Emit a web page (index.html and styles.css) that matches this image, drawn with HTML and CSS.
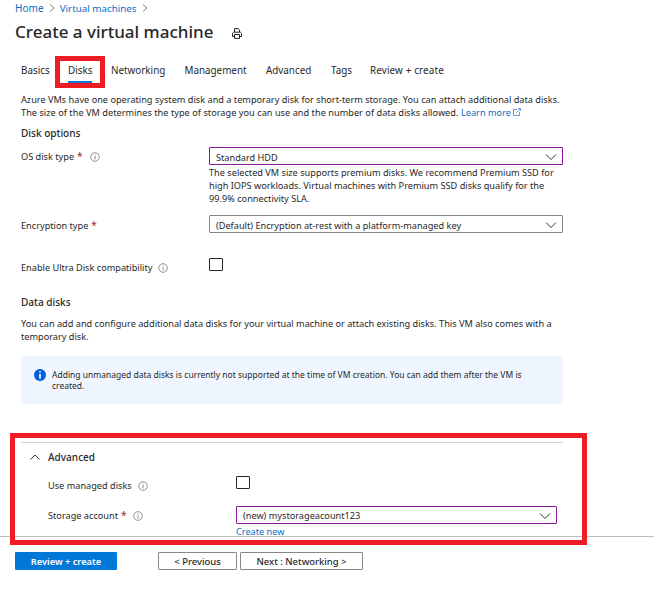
FILE: index.html
```html
<!DOCTYPE html>
<html lang="en">
<head>
<meta charset="utf-8">
<title>Create a virtual machine</title>
<link rel="stylesheet" href="styles.css">
</head>
<body>
<svg class="defs" width="0" height="0" aria-hidden="true">
  <symbol id="info" viewBox="0 0 10 10"><circle cx="5" cy="5" r="4.3" fill="none" stroke="#777" stroke-width=".8"/><path d="M5 4.2V7.4M5 2.5V3.3" stroke="#777" stroke-width=".9"/></symbol>
  <symbol id="down" viewBox="0 0 12 8"><path d="M1 1.5L6 6.5L11 1.5" fill="none" stroke="#333" stroke-width="1"/></symbol>
  <symbol id="sep" viewBox="0 0 6 8"><path d="M1 .5L5 4L1 7.5" fill="none" stroke="#777" stroke-width=".9"/></symbol>
</svg>
<nav class="crumbs">
  <a>Home</a><svg class="sep"><use href="#sep"/></svg><a>Virtual machines</a><svg class="sep"><use href="#sep"/></svg>
</nav>
<header class="title">
  <h1>Create a virtual machine</h1>
  <svg class="print" viewBox="0 0 10 11" fill="none" stroke="#222"><path d="M2.5 4V.6H6.2L7.5 1.9V4M2.5 8.5H.5V5.2L1.6 4.2H8.4L9.5 5.2V8.5H7.5M2.5 6.5H7.5V10.4H2.5Z"/></svg>
</header>
<nav class="tabs">
  <span>Basics</span><span class="active"><b>Disks</b></span><span>Networking</span><span>Management</span><span>Advanced</span><span>Tags</span><span class="review">Review + create</span>
</nav>
<main>
  <p class="text">Azure VMs have one operating system disk and a temporary disk for short-term storage. You can attach additional data disks.<br><span class="lead">The size of the VM determines the type of storage you can use and the number of data disks allowed. <a>Learn more</a></span> <svg class="ext" viewBox="0 0 8 8" fill="none" stroke="#3b82d0" stroke-width=".8"><path d="M4 1.5H.5V7.5H6.5V4M3.3 4.7L7.4 .6M5.2 .5H7.5V2.8"/></svg></p>
  <h2 class="opts">Disk options</h2>
  <div class="row os">
    <label>OS disk type <i>*</i><svg class="info"><use href="#info"/></svg></label>
    <div>
      <div class="select hot"><span>Standard HDD</span><svg class="down"><use href="#down"/></svg></div>
      <p class="text hint">The selected VM size supports premium disks. We recommend Premium SSD for<br>high IOPS workloads. Virtual machines with Premium SSD disks qualify for the<br>99.9% connectivity SLA.</p>
    </div>
  </div>
  <div class="row enc">
    <label>Encryption type <i>*</i></label>
    <div class="select"><span>(Default) Encryption at-rest with a platform-managed key</span><svg class="down"><use href="#down"/></svg></div>
  </div>
  <div class="row ultra">
    <label>Enable Ultra Disk compatibility<svg class="info"><use href="#info"/></svg></label>
    <span class="check"></span>
  </div>
  <h2 class="data">Data disks</h2>
  <p class="text">You can add and configure additional data disks for your virtual machine or attach existing disks. This VM also comes with a<br>temporary disk.</p>
  <div class="notice">
    <svg class="badge" viewBox="0 0 12 12"><circle cx="6" cy="6" r="6" fill="#015cda"/><path d="M6 5V9.8M6 2.2V3.8" stroke="#fff" stroke-width="1.6"/></svg>
    <p>Adding unmanaged data disks is currently not supported at the time of VM creation. You can add them after the VM is<br>created.</p>
  </div>
  <section class="advanced">
    <h2><svg class="up" viewBox="0 0 10 6"><path d="M.5 5.5L5 1L9.5 5.5" fill="none" stroke="#333"/></svg>Advanced</h2>
    <div class="row managed">
      <label>Use managed disks<svg class="info"><use href="#info"/></svg></label>
      <span class="check"></span>
    </div>
    <div class="row storage">
      <label>Storage account <i>*</i><svg class="info"><use href="#info"/></svg></label>
      <div>
        <div class="select hot"><span>(new) mystorageacount123</span><svg class="down"><use href="#down"/></svg></div>
        <a class="create">Create new</a>
      </div>
    </div>
    <span class="mark mark-advanced"></span>
  </section>
</main>
<footer>
  <button class="primary">Review + create</button>
  <button>&lt; Previous</button>
  <button class="next">Next : Networking &gt;</button>
</footer>
</body>
</html>
```
FILE: styles.css
```css
* { box-sizing: border-box; }
body {
  margin: 0;
  height: 603px;
  overflow: hidden;
  display: flex;
  flex-direction: column;
  background: #fff;
  color: #292827;
  font: 9.18px/13px "Noto Sans", "Open Sans", sans-serif;
  white-space: nowrap;
}
.defs { position: absolute; }
h1, h2, p { margin: 0; }
a { color: #0f6cc4; }
svg { display: block; flex: none; }

.crumbs {
  height: 16px;
  padding-left: 15px;
  display: flex;
  align-items: center;
  gap: 5px;
  font-size: 9.8px;
}
.crumbs a:first-child { font-size: 10.1px; }
.sep { width: 6px; height: 8px; }

.title {
  height: 32px;
  padding-left: 15px;
  display: flex;
  align-items: center;
  gap: 19px;
}
.title h1 { font-size: 17px; font-weight: 500; line-height: 24px; }
.print { width: 10px; height: 11px; margin-top: 3px; }

.tabs {
  margin-top: 8px;
  height: 32px;
  padding-left: 21px;
  display: grid;
  grid-template-columns: 34px 56px 73.5px 81.5px 65px 39px auto;
  font-size: 9.85px;
  line-height: 29px;
}
.active {
  width: 50px;
  height: 32px;
  border: 5px solid #ee1c25;
  padding: 0 8px;
}
.active b {
  display: block;
  height: 22px;
  line-height: 19px;
  font-weight: 400;
  border-bottom: 2px solid #0078d4;
}
.review { letter-spacing: 0.015em; }

main { flex: none; height: 448px; padding: 5px 0 0 21px; }
.lead { letter-spacing: 0.003em; }
.ext { display: inline-block; width: 8px; height: 8px; }
h2 { font-size: 10.05px; font-weight: 500; line-height: 14px; }
.opts { margin-top: 7px; }

.row { display: grid; grid-template-columns: 188px 354px; align-items: start; }
label { display: flex; align-items: center; height: 18px; }
label i { color: #a4262c; font-style: normal; font-size: 10px; margin-left: 3px; }
.info { width: 10px; height: 10px; margin: 1px 0 0 6px; }
.select {
  height: 18px;
  border: 1px solid #8a8886;
  border-radius: 1px;
  padding: 1px 5px 0 6px;
  display: flex;
  align-items: center;
  justify-content: space-between;
}
.hot { border-color: #881798; }
.down { width: 12px; height: 8px; }
.check { width: 14px; height: 13px; border: 1px solid #292827; border-radius: 1px; }
.os { margin-top: 7px; }
.os .select span, .enc .select span { padding-top: 2px; }
.os .info { margin-left: 7px; }
.hint { margin-top: 1px; }
.enc { margin-top: 10px; }
.enc label { padding-top: 2px; }
.ultra { margin-top: 25px; }
.ultra label { height: 18px; }
.data { margin-top: 19px; }
.data + p { margin-top: 8px; }

.notice {
  width: 542px;
  height: 48px;
  margin-top: 13px;
  padding: 13px 13px 0;
  display: flex;
  gap: 6px;
  background: #eff6ff;
  border-radius: 1px;
  font-size: 8.5px;
  line-height: 11px;
}
.badge { width: 12px; height: 12px; }

.advanced {
  position: relative;
  width: 542px;
  margin-top: 38px;
  border-top: 1px solid #d2d0ce;
}
.advanced h2 { display: flex; align-items: center; margin: 7px 0 0 9px; }
.up { width: 10px; height: 6px; margin-right: 8px; }
.advanced .row { grid-template-columns: 188px 321px; margin-left: 27px; }
.managed { margin-top: 12px; }
.storage { margin-top: 12px; }
.create { display: block; line-height: 13px; margin-top: 1px; }
.mark-advanced {
  position: absolute;
  left: -11px;
  top: -10px;
  width: 577px;
  height: 112px;
  border: 5px solid #ee1c25;
}

footer {
  border-top: 1px solid #bdbdbd;
  padding: 15px 0 0 15px;
  display: flex;
}
button {
  height: 18px;
  width: 79px;
  padding: 1px 0 0;
  border: 1px solid #8a8886;
  border-radius: 1px;
  background: #fff;
  color: #292827;
  font: 500 9.45px/15px "Noto Sans", "Open Sans", sans-serif;
}
.primary {
  width: 102px;
  margin-right: 41px;
  border: 0;
  background: #0078d7;
  color: #fff;
  font-weight: 600;
  font-size: 9.25px;
}
.next { width: 123px; margin-left: 3px; }
```
